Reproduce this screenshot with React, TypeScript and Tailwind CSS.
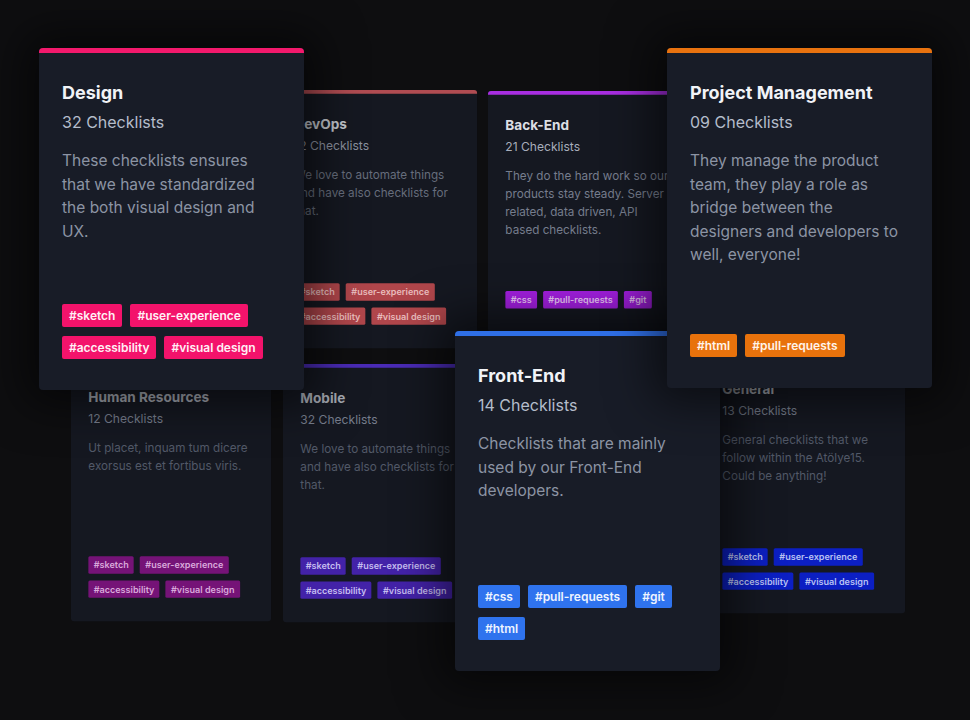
import clsx from "clsx";

type Tone = { title: string; count: string; text: string };

const tones: Record<string, Tone> = {
  front: { title: "text-[#f1f3f7]", count: "text-[#b5bdcb]", text: "text-[#8c94a4]" },
  backend: { title: "text-[#dcdee4]", count: "text-[#a8aebb]", text: "text-[#767d8d]" },
  devops: { title: "text-[#c3c6cd]", count: "text-[#8b919e]", text: "text-[#666d7c]" },
  dim: { title: "text-[#a4a8b1]", count: "text-[#767d8c]", text: "text-[#525968]" },
};

type Card = {
  title: string;
  count: string;
  text: string;
  tags: string[];
  pos: string;
  height: string;
  bar: string;
  tag: string;
  tone: keyof typeof tones;
  small?: boolean;
  textWidth?: string;
};

// back row first, big cards last so they sit on top
const cards: Card[] = [
  {
    title: "DevOps",
    count: "12 Checklists",
    text: "We love to automate things and have also checklists for that.",
    tags: ["#sketch", "#user-experience", "#accessibility", "#visual design"],
    pos: "left-[277px] top-[90px]",
    height: "h-[342px]",
    bar: "bg-[#b04c52]",
    tag: "bg-[#b0464b] text-[#e9bcbc]",
    tone: "devops",
    small: true,
  },
  {
    title: "Back-End",
    count: "21 Checklists",
    text: "They do the hard work so our products stay steady. Server related, data driven, API based checklists.",
    tags: ["#css", "#pull-requests", "#git"],
    pos: "left-[488px] top-[91px]",
    height: "h-[319px]",
    bar: "bg-[#a82ee2]",
    tag: "bg-[#a31fe0] text-[#ecc6fa]",
    tone: "backend",
    small: true,
  },
  {
    title: "Human Resources",
    count: "12 Checklists",
    text: "Ut placet, inquam tum dicere exorsus est et fortibus viris.",
    tags: ["#sketch", "#user-experience", "#accessibility", "#visual design"],
    pos: "left-[71px] top-[363px]",
    height: "h-[342px]",
    bar: "bg-[#7a1a7e]",
    tag: "bg-[#751377] text-[#d9a9db]",
    tone: "dim",
    small: true,
  },
  {
    title: "Mobile",
    count: "32 Checklists",
    text: "We love to automate things and have also checklists for that.",
    tags: ["#sketch", "#user-experience", "#accessibility", "#visual design"],
    pos: "left-[283px] top-[364px]",
    height: "h-[342px]",
    bar: "bg-[#4a2bb6]",
    tag: "bg-[#4322a8] text-[#c5bdf0]",
    tone: "dim",
    small: true,
  },
  {
    title: "General",
    count: "13 Checklists",
    text: "General checklists that we follow within the Atölye15. Could be anything!",
    tags: ["#sketch", "#user-experience", "#accessibility", "#visual design"],
    pos: "left-[705px] top-[355px]",
    height: "h-[342px]",
    bar: "bg-[#1431c8]",
    tag: "bg-[#0c1fc3] text-[#b9c2f3]",
    tone: "dim",
    small: true,
  },
  {
    title: "Front-End",
    count: "14 Checklists",
    text: "Checklists that are mainly used by our Front-End developers.",
    tags: ["#css", "#pull-requests", "#git", "#html"],
    pos: "left-[455px] top-[331px]",
    height: "h-[340px]",
    bar: "bg-[#2f6fe6]",
    tag: "bg-[#2f73ee] text-[#eef4ff]",
    tone: "front",
  },
  {
    title: "Design",
    count: "32 Checklists",
    text: "These checklists ensures that we have standardized the both visual design and UX.",
    tags: ["#sketch", "#user-experience", "#accessibility", "#visual design"],
    pos: "left-[39px] top-[48px]",
    height: "h-[342px]",
    bar: "bg-[#f3196c]",
    tag: "bg-[#f3136b] text-[#fff0f5]",
    tone: "front",
    textWidth: "max-w-[208px]",
  },
  {
    title: "Project Management",
    count: "09 Checklists",
    text: "They manage the product team, they play a role as bridge between the designers and developers to well, everyone!",
    tags: ["#html", "#pull-requests"],
    pos: "left-[667px] top-[48px]",
    height: "h-[340px]",
    bar: "bg-[#e8720f]",
    tag: "bg-[#e8720c] text-[#fff4ea]",
    tone: "front",
  },
];

function ChecklistCard({ card }: { card: Card }) {
  const tone = tones[card.tone];
  return (
    <div
      className={clsx(
        "absolute flex w-[265px] flex-col rounded-[4px]",
        card.pos,
        card.height,
        card.small
          ? "origin-top-left scale-[0.755] bg-[#151821]"
          : "bg-[#181c27] shadow-[0_0_45px_14px_rgba(0,0,0,0.55)]"
      )}
    >
      <div className={clsx("h-[5px] rounded-t-[4px]", card.bar)} />
      <div className="flex flex-1 flex-col px-[23px] pt-[28px] pb-[31px]">
        <h2 className={clsx("text-[18px] font-bold leading-[24px]", tone.title)}>{card.title}</h2>
        <p className={clsx("mt-[5px] text-[16px] leading-[24px]", tone.count)}>{card.count}</p>
        <p className={clsx("mt-[15px] text-[15.5px] leading-[23.5px]", tone.text, card.textWidth)}>
          {card.text}
        </p>
        <div className="mt-auto flex flex-wrap gap-x-2 gap-y-[9px]">
          {card.tags.map((t) => (
            <span
              key={t}
              className={clsx("rounded-[2px] px-[7px] text-[12px] font-semibold leading-[23px]", card.tag)}
            >
              {t}
            </span>
          ))}
        </div>
      </div>
    </div>
  );
}

export default function App() {
  return (
    <div className="relative h-[720px] w-[970px] overflow-hidden bg-[#0e0e10] font-['Inter','Noto_Sans',sans-serif]">
      {cards.map((c) => (
        <ChecklistCard key={c.title} card={c} />
      ))}
    </div>
  );
}
